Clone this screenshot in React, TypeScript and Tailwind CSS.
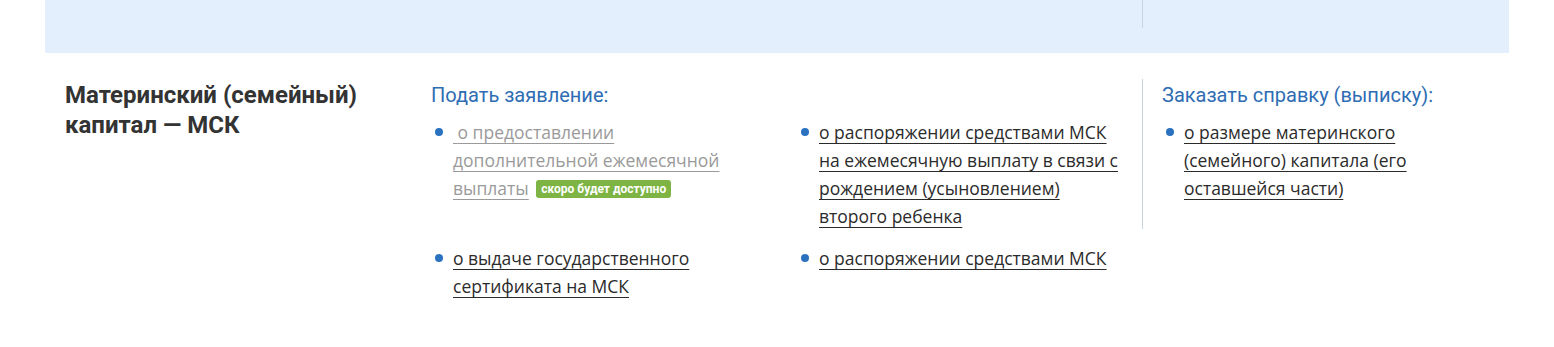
const linkFont = { fontFamily: '"Open Sans", "Noto Sans", sans-serif' }

function Bullet({ children }: { children: React.ReactNode }) {
    return (
        <li className="relative pl-[22px] text-[17.5px] leading-[28px]">
            <span className="absolute left-[4px] top-[10px] w-[8px] h-[8px] rounded-full bg-[#2a72c0]" />
            {children}
        </li>
    )
}

function Link({ children, muted }: { children: React.ReactNode; muted?: boolean }) {
    return (
        <a
            href="#"
            className={
                muted
                    ? "text-[#9a9a9a] underline decoration-1 underline-offset-[4px]"
                    : "text-[#2b2b2b] underline decoration-1 underline-offset-[4px]"
            }
        >
            {children}
        </a>
    )
}

export default function App() {
    return (
        <div className="w-[1554px] h-[347px] bg-white px-[45px] font-['Roboto',sans-serif]">
            <div className="h-[53px] bg-[#e3effd] flex">
                <div className="w-[1097px]" />
                <div className="h-[28px] border-l border-[#c9d3de]" />
            </div>

            <div className="flex pt-[26px]">
                <div className="w-[386px] pl-[20px] pt-[1px]">
                    <h2 className="text-[24px] leading-[30px] font-bold text-[#333333]">
                        Материнский (семейный)
                        <br />
                        капитал — МСК
                    </h2>
                </div>

                <div className="w-[711px]">
                    <h3 className="text-[20px] leading-[24px] text-[#2e6db4] pt-[4px] mb-[11px]">Подать заявление:</h3>
                    <ul className="grid grid-cols-[366px_345px] gap-y-[14px]" style={linkFont}>
                        <Bullet>
                            <div className="w-[290px]">
                                <Link muted>{"\u00a0"}о предоставлении дополнительной ежемесячной выплаты</Link>{" "}
                                <span className="inline-block align-[2px] ml-[3px] px-[5px] h-[18px] leading-[18px] rounded-[3px] bg-[#7db443] text-white text-[12px] font-bold font-['Roboto',sans-serif]">
                                    скоро будет доступно
                                </span>
                            </div>
                        </Bullet>
                        <Bullet>
                            <div className="w-[312px]">
                                <Link>о распоряжении средствами МСК на ежемесячную выплату в связи с рождением (усыновлением) второго ребенка</Link>
                            </div>
                        </Bullet>
                        <Bullet>
                            <div className="w-[260px]">
                                <Link>о выдаче государственного сертификата на МСК</Link>
                            </div>
                        </Bullet>
                        <Bullet>
                            <Link>о распоряжении средствами МСК</Link>
                        </Bullet>
                    </ul>
                </div>

                <div className="h-[150px] border-l border-[#c9d3de] pl-[19px] w-[366px]">
                    <h3 className="text-[20px] leading-[24px] text-[#2e6db4] pt-[4px] mb-[11px]">Заказать справку (выписку):</h3>
                    <ul style={linkFont}>
                        <Bullet>
                            <div className="w-[240px]">
                                <Link>о размере материнского (семейного) капитала (его оставшейся части)</Link>
                            </div>
                        </Bullet>
                    </ul>
                </div>
            </div>
        </div>
    )
}
